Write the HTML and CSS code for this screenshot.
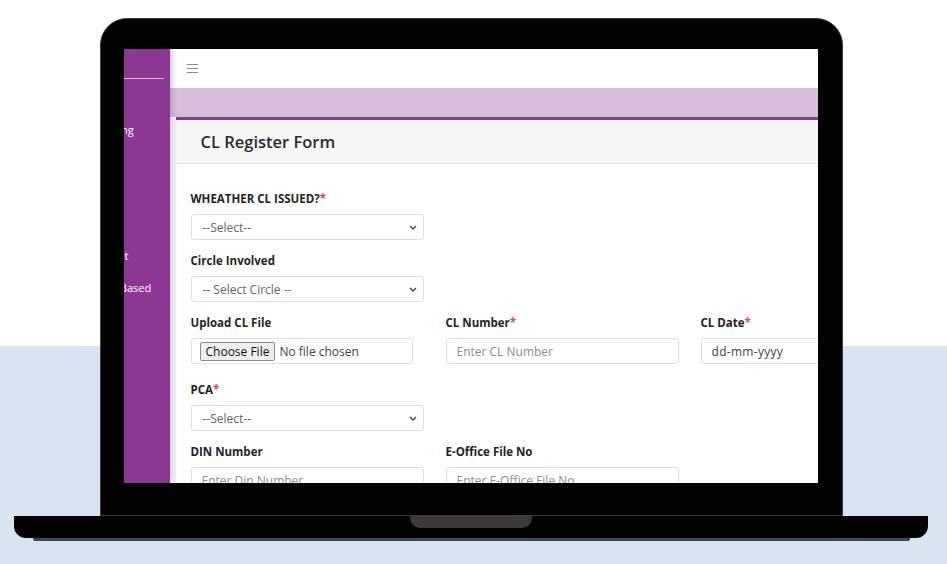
FILE: index.html
```html
<!DOCTYPE html>
<html lang="en">
<head>
    <meta charset="UTF-8">
    <meta name="viewport" content="width=device-width, initial-scale=1.0">
    <title>CL Register Form</title>
    <link rel="stylesheet" href="styles.css">
</head>
<body>
    <div class="scene">
        <div class="laptop">
            <div class="lid">
                <div class="screen">
                    <!-- sidebar is scrolled, only its right edge shows -->
                    <aside class="sidebar">
                        <div class="sidebar-inner">
                            <div class="brand"></div>
                            <nav class="side-nav">
                                <a href="#">CL Pending</a>
                                <a href="#">Reports</a>
                                <a href="#">CL List</a>
                                <a href="#">Users</a>
                                <a href="#">CL Submit</a>
                                <a href="#">Division Based</a>
                            </nav>
                        </div>
                    </aside>

                    <main class="main">
                        <header class="topbar">
                            <svg class="burger" width="11" height="9" viewBox="0 0 11 9">
                                <path d="M0 0.5H11M0 4.5H11M0 8.5H11" stroke="#8a8a8a" stroke-width="1"/>
                            </svg>
                        </header>
                        <div class="page-band"></div>

                        <div class="content">
                            <div class="card">
                                <div class="card-header">
                                    <h2>CL Register Form</h2>
                                </div>
                                <form class="card-body">
                                    <div class="form-row">
                                        <div class="field">
                                            <label>WHEATHER CL ISSUED?<span class="req">*</span></label>
                                            <div class="select-wrap">
                                                <select class="control">
                                                    <option>--Select--</option>
                                                    <option>Yes</option>
                                                    <option>No</option>
                                                </select>
                                                <svg class="chevron" width="8" height="5" viewBox="0 0 8 5"><path d="M1 1l3 3 3-3" fill="none" stroke="#444" stroke-width="1.4"/></svg>
                                            </div>
                                        </div>
                                    </div>

                                    <div class="form-row">
                                        <div class="field">
                                            <label>Circle Involved</label>
                                            <div class="select-wrap">
                                                <select class="control">
                                                    <option>-- Select Circle --</option>
                                                </select>
                                                <svg class="chevron" width="8" height="5" viewBox="0 0 8 5"><path d="M1 1l3 3 3-3" fill="none" stroke="#444" stroke-width="1.4"/></svg>
                                            </div>
                                        </div>
                                    </div>

                                    <div class="form-row spaced">
                                        <div class="field">
                                            <label>Upload CL File</label>
                                            <label class="control file-input">
                                                <span class="file-btn">Choose File</span>
                                                <span class="file-name">No file chosen</span>
                                                <input type="file" hidden>
                                            </label>
                                        </div>
                                        <div class="field">
                                            <label>CL Number<span class="req">*</span></label>
                                            <input class="control" type="text" placeholder="Enter CL Number">
                                        </div>
                                        <div class="field">
                                            <label>CL Date<span class="req">*</span></label>
                                            <input class="control date" type="text" placeholder="dd-mm-yyyy">
                                        </div>
                                    </div>

                                    <div class="form-row">
                                        <div class="field">
                                            <label>PCA<span class="req">*</span></label>
                                            <div class="select-wrap">
                                                <select class="control">
                                                    <option>--Select--</option>
                                                </select>
                                                <svg class="chevron" width="8" height="5" viewBox="0 0 8 5"><path d="M1 1l3 3 3-3" fill="none" stroke="#444" stroke-width="1.4"/></svg>
                                            </div>
                                        </div>
                                    </div>

                                    <div class="form-row">
                                        <div class="field">
                                            <label>DIN Number</label>
                                            <input class="control" type="text" placeholder="Enter Din Number">
                                        </div>
                                        <div class="field">
                                            <label>E-Office File No</label>
                                            <input class="control" type="text" placeholder="Enter E-Office File No">
                                        </div>
                                    </div>
                                </form>
                            </div>
                        </div>
                    </main>
                </div>
            </div>
            <div class="base">
                <div class="notch"></div>
            </div>
            <div class="base-shadow"></div>
        </div>
    </div>
</body>
</html>
```

FILE: styles.css
```css
body {
    margin: 0;
    font-family: "Open Sans", Arial, sans-serif;
}

.scene {
    width: 947px;
    height: 564px;
    padding-top: 18px;
    box-sizing: border-box;
    overflow: hidden;
    background: linear-gradient(to bottom, #ffffff 0, #ffffff 346px, #d7e5f0 346px);
}

.laptop {
    width: 914px;
    margin-left: 14px;
}

.lid {
    width: 743px;
    height: 498px;
    margin: 0 auto;
    box-sizing: border-box;
    padding: 30px 24px 32px 23px;
    background-color: #020203;
    border: 1px solid #3c3c3c;
    border-radius: 27px 27px 0 0;
}

.screen {
    width: 694px;
    height: 434px;
    display: flex;
    overflow: hidden;
    background-color: #fff;
}

.base {
    height: 22px;
    background-color: #020203;
    border-radius: 0 0 12px 12px;
}

.notch {
    width: 122px;
    height: 12px;
    margin: 0 auto;
    background-color: #3b3937;
    border-radius: 0 0 10px 10px;
}

.base-shadow {
    width: 877px;
    height: 3px;
    margin-left: 19px;
    background-color: #40484b;
    border-radius: 0 0 2px 2px;
}

/* sidebar */
.sidebar {
    flex: none;
    width: 46px;
    background-color: #8d3794;
    overflow: hidden;
    position: relative;
    z-index: 2;
    box-shadow: 2px 0 6px rgba(90, 50, 100, 0.3);
}

.sidebar-inner {
    width: 109px;
    margin-left: -63px;
}

.brand {
    height: 29px;
    margin-right: 6px;
    border-bottom: 1px solid rgba(255, 255, 255, 0.7);
}

.side-nav {
    padding-top: 35px;
    display: flex;
    flex-direction: column;
}

.side-nav a {
    display: block;
    padding: 7px 0 7px 16px;
    line-height: 17.5px;
    font-size: 11px;
    color: #fff;
    text-decoration: none;
    white-space: nowrap;
}

/* main area */
.main {
    flex: none;
    width: 900px;
}

.topbar {
    height: 39px;
    display: flex;
    align-items: center;
    padding-left: 17px;
    background-color: #fff;
}

.burger {
    display: block;
}

.page-band {
    height: 29px;
    background-color: #d8bedd;
}

.content {
    padding-left: 6px;
}

.card {
    border-top: 3px solid #8c3b93;
    background-color: #fff;
    box-shadow: -1px 0 4px rgba(0, 0, 0, 0.08);
}

.card-header {
    height: 43px;
    display: flex;
    align-items: center;
    padding-left: 25px;
    background-color: #f7f7f7;
    border-bottom: 1px solid #dedede;
}

.card-header h2 {
    margin: 0;
    font-size: 16.5px;
    font-weight: 600;
    color: #2a2a2a;
}

.card-body {
    padding: 26px 15px 20px;
}

.form-row {
    display: grid;
    grid-template-columns: repeat(3, 233px);
    column-gap: 22px;
    margin-bottom: 12px;
}

.form-row.spaced {
    margin-bottom: 17px;
}

.field label {
    display: block;
    margin-bottom: 6px;
    font-size: 11.5px;
    line-height: 18px;
    font-weight: 700;
    color: #1f2326;
}

.req {
    color: #d9475d;
}

.control {
    display: block;
    width: 100%;
    height: 26px;
    box-sizing: border-box;
    padding: 0 10px;
    border: 1px solid #dcdfe3;
    border-radius: 3px;
    background-color: #fff;
    font-family: inherit;
    font-size: 12px;
    color: #666;
    outline: none;
}

.control::placeholder {
    color: #8d8d8d;
}

.control.date::placeholder {
    color: #444;
    letter-spacing: 0.3px;
}

.select-wrap {
    position: relative;
}

.select-wrap select {
    appearance: none;
    -webkit-appearance: none;
    padding-left: 11px;
}

.chevron {
    position: absolute;
    right: 7px;
    top: 11px;
    pointer-events: none;
}

.field .file-input {
    display: flex;
    align-items: center;
    width: 222px;
    padding: 0 0 0 8px;
    margin: 0;
    font-weight: 400;
    line-height: normal;
    cursor: pointer;
}

.file-btn {
    padding: 1px 5px;
    background-color: #efefef;
    border: 1px solid #8a8a8a;
    border-radius: 2px;
    color: #111;
    font-size: 12px;
    line-height: 15px;
}

.file-name {
    margin-left: 4px;
    color: #444;
    font-size: 12px;
}
```
